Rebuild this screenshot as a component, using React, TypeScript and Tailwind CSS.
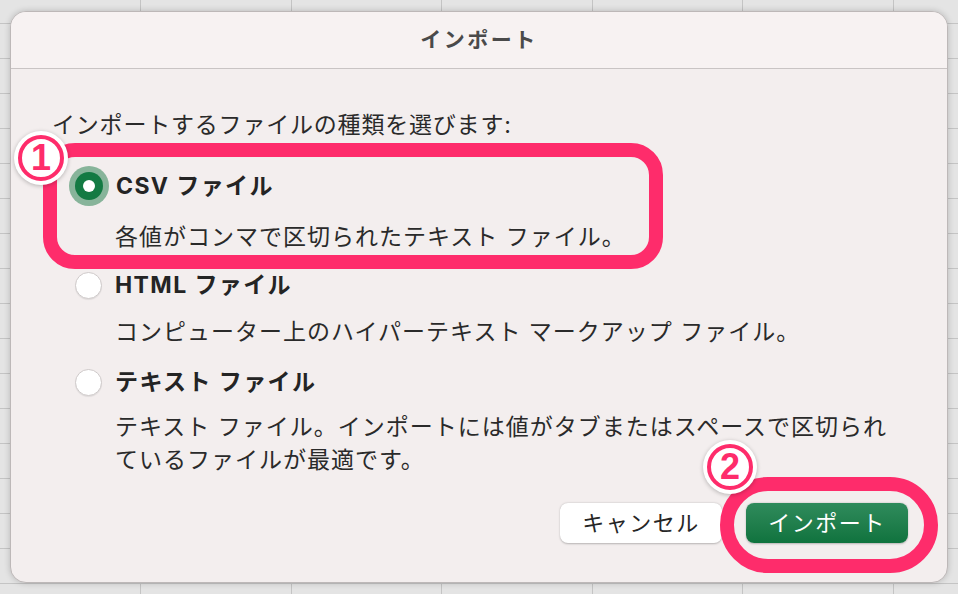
import React from "react";

type OptionProps = {
  label: string;
  desc: React.ReactNode;
  selected?: boolean;
  rowClass: string;
  descClass: string;
};

function Radio({ selected }: { selected?: boolean }) {
  if (selected) {
    return (
      <span className="flex-shrink-0 w-[28px] h-[28px] rounded-full bg-[#137a43] ring-[6px] ring-[#1c7a45]/50 flex items-center justify-center">
        <span className="w-[12px] h-[12px] rounded-full bg-white" />
      </span>
    );
  }
  return (
    <span className="flex-shrink-0 w-[27px] h-[27px] rounded-full bg-white border border-[#cfcaca] shadow-[0_1px_1px_rgba(0,0,0,0.08)]" />
  );
}

function Option({ label, desc, selected, rowClass, descClass }: OptionProps) {
  return (
    <div className={rowClass}>
      <div className="flex items-center gap-[13px] h-[32px] pl-[23px]">
        <Radio selected={selected} />
        <span className="font-bold text-[23px] tracking-[1.4px] text-[#242424]">{label}</span>
      </div>
      <p className={`${descClass} pl-[63px] text-[23px] leading-[33px] tracking-[1px] text-[#2a2a2a]`}>{desc}</p>
    </div>
  );
}

function Badge({ n, className }: { n: string; className: string }) {
  return (
    <div
      className={`absolute w-[54px] h-[54px] rounded-full bg-white shadow-[0_1px_4px_rgba(0,0,0,0.25)] flex items-center justify-center ${className}`}
    >
      <div className="w-[46px] h-[46px] rounded-full border-[4px] border-[#fe2c6b] flex items-center justify-center">
        <span className="font-black text-[36px] leading-none text-[#fe2c6b] font-['Liberation_Sans',sans-serif]">{n}</span>
      </div>
    </div>
  );
}

export default function App() {
  return (
    <div className="relative w-[958px] h-[594px] overflow-hidden bg-[#e4e4e4] bg-[repeating-linear-gradient(180deg,transparent_0px,transparent_23px,#c4c4c4_23px,#c4c4c4_24px,transparent_24px,transparent_35px),repeating-linear-gradient(90deg,transparent_0px,transparent_140px,#c4c4c4_140px,#c4c4c4_141px,transparent_141px,transparent_150.6px)] font-['Inter','Noto_Sans_CJK_JP',sans-serif] pt-[11px] pl-[10px]">
      <div className="w-[938px] h-[572px] rounded-[16px] border border-[#bdb8b8] bg-[#f3eeee] shadow-[0_0_6px_rgba(0,0,0,0.2)] flex flex-col overflow-hidden">
        {/* Title bar */}
        <div className="h-[57px] flex-shrink-0 bg-[#f7f2f2] border-b border-[#c9c4c4] flex items-center justify-center">
          <span className="font-bold text-[21px] tracking-[2.5px] text-[#4a4a4a]">インポート</span>
        </div>

        <div className="flex-1 flex flex-col pt-[40px] pl-[41px]">
          <p className="text-[23px] leading-[32px] tracking-[0.8px] text-[#2a2a2a]">
            インポートするファイルの種類を選びます:
          </p>

          <Option
            selected
            label="CSV ファイル"
            desc="各値がコンマで区切られたテキスト ファイル。"
            rowClass="mt-[29px]"
            descClass="mt-[19px]"
          />
          <Option
            label="HTML ファイル"
            desc="コンピューター上のハイパーテキスト マークアップ ファイル。"
            rowClass="mt-[15px]"
            descClass="mt-[15px]"
          />
          <Option
            label="テキスト ファイル"
            desc={
              <>
                テキスト ファイル。インポートには値がタブまたはスペースで区切られ
                <br />
                ているファイルが最適です。
              </>
            }
            rowClass="mt-[17px]"
            descClass="mt-[13px]"
          />

          <div className="mt-auto flex justify-end gap-[24px] pr-[39px] pb-[39px]">
            <button className="w-[162px] h-[40px] rounded-[8px] bg-white shadow-[0_0.5px_2px_rgba(0,0,0,0.25)] text-[22px] tracking-[1.5px] text-[#262626]">
              キャンセル
            </button>
            <button className="w-[162px] h-[40px] rounded-[8px] bg-gradient-to-b from-[#2f8b5c] to-[#0f733e] shadow-[0_0.5px_2px_rgba(0,0,0,0.25)] text-[22px] tracking-[1.5px] text-white">
              インポート
            </button>
          </div>
        </div>
      </div>

      {/* Annotations */}
      <div className="absolute left-[43px] top-[143px] w-[620px] h-[126px] rounded-[32px] border-[14px] border-[#fe2c6b] pointer-events-none" />
      <div className="absolute left-[720px] top-[477px] w-[218px] h-[96px] rounded-full border-[14px] border-[#fe2c6b] pointer-events-none" />
      <Badge n="1" className="left-[14px] top-[131px]" />
      <Badge n="2" className="left-[703px] top-[440px]" />
    </div>
  );
}
